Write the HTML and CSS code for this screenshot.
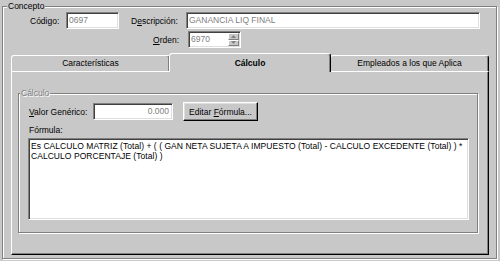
FILE: index.html
```html
<!DOCTYPE html>
<html lang="es">
  <head>
    <meta charset="UTF-8" />
    <title>Concepto</title>
    <link rel="stylesheet" href="styles.css">
  </head>
  <body>
    <div class="group concept">
      <span class="group_title">Concepto</span>

      <div class="row row_top">
        <span class="lbl lbl_codigo">Código:</span>
        <div class="field field_codigo">0697</div>
        <span class="lbl lbl_desc">D<u>e</u>scripción:</span>
        <div class="field field_desc">GANANCIA LIQ FINAL</div>
      </div>

      <div class="row row_orden">
        <span class="lbl lbl_orden"><u>O</u>rden:</span>
        <div class="field field_orden">
          <span class="field_text">6970</span>
          <span class="spin">
            <span class="spin_btn">
              <svg width="5" height="3" viewBox="0 0 5 3"><path d="M2.5 0 L5 3 L0 3 Z" fill="#808080"/></svg>
            </span>
            <span class="spin_btn">
              <svg width="5" height="3" viewBox="0 0 5 3"><path d="M0 0 L5 0 L2.5 3 Z" fill="#808080"/></svg>
            </span>
          </span>
        </div>
      </div>

      <div class="tabs">
        <div class="tab tab_first">Características</div>
        <div class="tab tab_active">Cálculo</div>
        <div class="tab tab_last">Empleados a los que Aplica</div>
      </div>

      <div class="panel">
        <div class="group calc">
          <span class="group_title group_title_off">Cálculo</span>

          <div class="row row_valor">
            <span class="lbl lbl_valor"><u>V</u>alor Genérico:</span>
            <div class="field field_valor">0.000</div>
            <div class="btn"><span>Editar <u>F</u>órmula...</span></div>
          </div>

          <div class="lbl lbl_formula">Fórmula:</div>
          <div class="memo">Es CALCULO MATRIZ (Total) + ( ( GAN NETA SUJETA A IMPUESTO (Total) - CALCULO EXCEDENTE (Total) ) *
CALCULO PORCENTAJE (Total) )</div>
        </div>
      </div>
    </div>
  </body>
</html>
```

FILE: styles.css
```css
/* variables */
:root {
  --face: #c8c8c8;
  --shadow: #808080;
  --dark: #000;
  --light: #fff;
  --uiFont: "Liberation Sans", Arial, sans-serif;
}

/* base */
*,
::before,
::after {
  box-sizing: border-box;
  margin: 0;
  padding: 0;
}
body {
  width: 500px;
  height: 261px;
  overflow: hidden;
  background-color: var(--face);
  color: #000;
  font-family: var(--uiFont);
  font-size: 8.5px;
  line-height: 10px;
}
u {
  text-decoration: underline;
  text-underline-offset: 1px;
}

/* etched group boxes */
.group {
  position: relative;
  border: 1px solid var(--shadow);
  box-shadow: inset 1px 1px 0 var(--light), 1px 1px 0 var(--light);
}
.group_title {
  position: absolute;
  top: -6px;
  left: 4px;
  padding: 0 1px;
  background-color: var(--face);
  line-height: 10px;
}
.group_title_off {
  left: 1px;
  color: var(--shadow);
  text-shadow: 1px 1px 0 var(--light);
}

.concept {
  margin: 6px 0 0 2px;
  width: 495px;
  height: 253px;
}

/* rows */
.row {
  display: flex;
  align-items: center;
}
.lbl {
  white-space: nowrap;
}

/* sunken edit boxes */
.field {
  height: 17px;
  padding: 0 2px;
  background-color: var(--light);
  color: var(--shadow);
  border: 1px solid;
  border-color: var(--shadow) var(--light) var(--light) var(--shadow);
  box-shadow: inset 1px 1px 0 #404040, inset -1px -1px 0 #dfdfdf;
  line-height: 15px;
  white-space: nowrap;
}

.row_top {
  margin-top: 5px;
  padding-left: 27px;
}
.lbl_codigo {
  width: 36px;
}
.field_codigo {
  width: 53px;
}
.lbl_desc {
  width: 55px;
  margin-left: 12px;
}
.field_desc {
  width: 294px;
}

.row_orden {
  margin-top: 2px;
  padding-left: 150px;
}
.lbl_orden {
  width: 35px;
}
.field_orden {
  display: flex;
  width: 53px;
  padding-right: 1px;
}
.field_text {
  flex: 1;
}
.spin {
  display: flex;
  flex-direction: column;
  width: 11px;
  height: 13px;
  margin-top: 1px;
}
.spin_btn {
  display: flex;
  align-items: center;
  justify-content: center;
  height: 6px;
  flex: 1;
  background-color: var(--face);
  border: 1px solid;
  border-color: var(--light) var(--shadow) var(--shadow) var(--light);
}

/* tabs */
.tabs {
  display: flex;
  margin: 7px 0 0 8px;
  width: 478px;
  height: 16px;
}
.tab {
  position: relative;
  width: 159px;
  height: 16px;
  text-align: center;
  line-height: 15px;
  border: 1px solid;
  border-bottom: 0;
  border-color: var(--light) var(--dark) transparent var(--light);
  border-radius: 3px 3px 0 0;
  box-shadow: inset -1px 0 0 var(--shadow);
  white-space: nowrap;
}
.tab_active {
  z-index: 1;
  width: 162px;
  height: 19px;
  margin: -2px -1px -1px;
  background-color: var(--face);
  font-weight: bold;
  line-height: 18px;
}

.panel {
  margin-left: 8px;
  width: 478px;
  height: 184px;
  border: 1px solid;
  border-color: var(--light) var(--dark) var(--dark) var(--light);
  box-shadow: inset -1px -1px 0 var(--shadow);
}

/* calculo group */
.calc {
  margin: 21px 0 0 6px;
  width: 460px;
  height: 140px;
}
.row_valor {
  margin-top: 8px;
  padding-left: 10px;
}
.lbl_valor {
  width: 64px;
}
.field_valor {
  width: 80px;
  text-align: right;
  padding-right: 3px;
}
.btn {
  display: flex;
  align-items: center;
  justify-content: center;
  width: 75px;
  height: 19px;
  margin-left: 10px;
  border: 1px solid;
  border-color: var(--light) var(--dark) var(--dark) var(--light);
  box-shadow: inset -1px -1px 0 var(--shadow), inset 1px 1px 0 #dfdfdf;
  white-space: nowrap;
}
.lbl_formula {
  margin: 4px 0 0 10px;
  height: 13px;
}
.memo {
  margin-left: 9px;
  width: 441px;
  height: 82px;
  padding: 2px 2px;
  background-color: var(--light);
  border: 1px solid;
  border-color: var(--shadow) var(--light) var(--light) var(--shadow);
  box-shadow: inset 1px 1px 0 #404040, inset -1px -1px 0 #dfdfdf;
  white-space: pre-line;
  line-height: 10px;
  letter-spacing: 0.05px;
}
```
